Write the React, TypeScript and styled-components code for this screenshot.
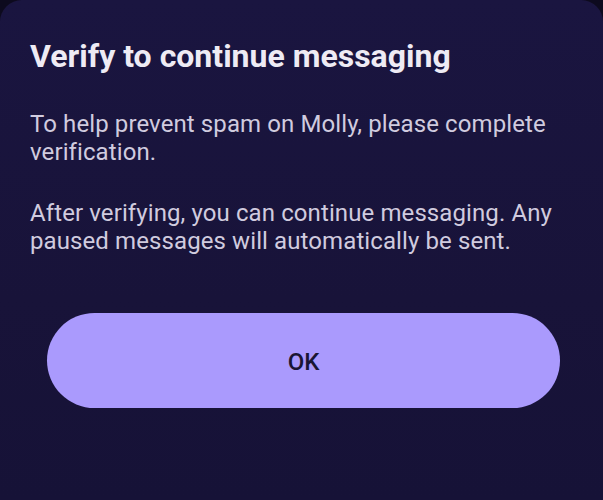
import React from "react";
import styled, { createGlobalStyle } from "styled-components";

const Global = createGlobalStyle`
  html, body { margin: 0; padding: 0; background: #0d0a1e; }
  body { font-family: Roboto, "Noto Sans", sans-serif; }
`;

const Sheet = styled.div`
  width: 603px;
  height: 500px;
  box-sizing: border-box;
  background: linear-gradient(180deg, #1a1540 0%, #181339 60%, #161237 100%);
  border-radius: 22px 22px 0 0;
  padding: 37px 30px 0 30px;
  display: flex;
  flex-direction: column;
`;

const Title = styled.h1`
  margin: 0;
  font-size: 32px;
  font-weight: 700;
  line-height: 38px;
  color: #eeebf4;
  letter-spacing: 0;
`;

const Text = styled.div`
  margin-top: 35px;
  display: flex;
  flex-direction: column;
  gap: 33px;
`;

const Body = styled.p`
  margin: 0;
  font-size: 24px;
  font-weight: 400;
  line-height: 28px;
  letter-spacing: 0.1px;
  color: #d0cbdf;
`;

const Actions = styled.div`
  margin-top: 58px;
  padding: 0 13px 0 17px;
`;

const PillButton = styled.button`
  width: 100%;
  height: 95px;
  padding: 3px 0 0;
  border: none;
  border-radius: 48px;
  background: #aa9afd;
  color: #1a1533;
  font-family: Roboto, "Noto Sans", sans-serif;
  font-size: 24px;
  font-weight: 500;
  cursor: pointer;
`;

export default function App() {
  return (
    <>
      <Global />
      <Sheet>
        <Title>Verify to continue messaging</Title>
        <Text>
          <Body>To help prevent spam on Molly, please complete verification.</Body>
          <Body>After verifying, you can continue messaging. Any paused messages will automatically be sent.</Body>
        </Text>
        <Actions>
          <PillButton>OK</PillButton>
        </Actions>
      </Sheet>
    </>
  );
}
